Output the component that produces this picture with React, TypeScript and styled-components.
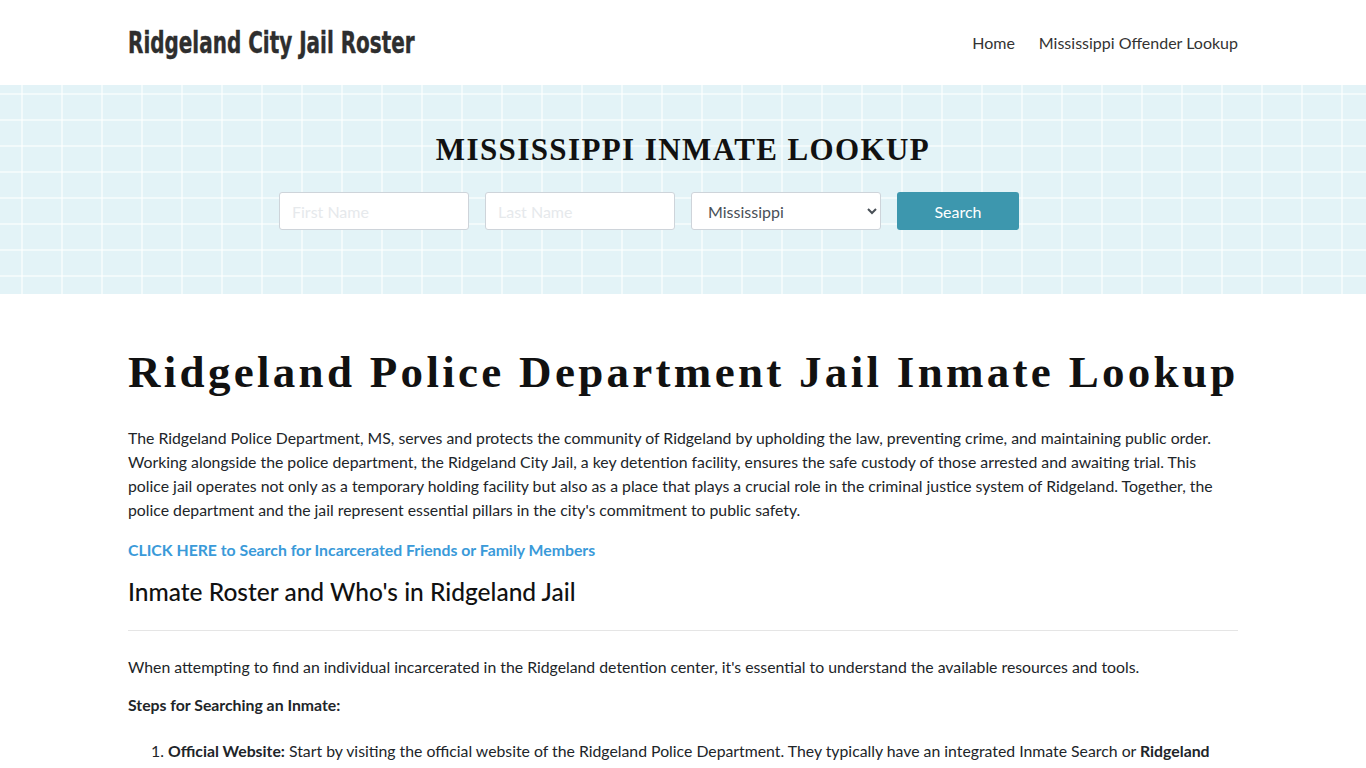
import React from "react";
import styled, { createGlobalStyle } from "styled-components";

const GlobalStyle = createGlobalStyle`
  * { box-sizing: border-box; }
  body {
    margin: 0;
    font-family: Lato, "Noto Sans", sans-serif;
    font-size: 15.8px;
    line-height: 24px;
    color: #212529;
    background: #fff;
  }
`;

const Container = styled.div`
  width: 1110px;
  margin: 0 auto;
`;

const Header = styled.header`
  height: 85px;
  background: #fff;
`;

const HeaderInner = styled(Container)`
  height: 100%;
  display: flex;
  align-items: center;
  justify-content: space-between;
`;

const Brand = styled.a`
  display: inline-block;
  font-family: "Liberation Sans Narrow", "DejaVu Sans Condensed", sans-serif;
  font-weight: 700;
  font-size: 30px;
  color: #2e2e2e;
  text-decoration: none;
  white-space: nowrap;
  transform: scaleX(0.74);
  transform-origin: left center;
  -webkit-text-stroke: 0.4px #2e2e2e;
  margin-top: 1px;
`;

const Nav = styled.nav`
  display: flex;
  gap: 24px;
`;

const NavLink = styled.a`
  font-size: 16px;
  color: #333;
  text-decoration: none;
`;

const Banner = styled.section`
  height: 209px;
  background-color: #e3f3f7;
  background-image:
    linear-gradient(90deg, rgba(255, 255, 255, 0.55) 2px, transparent 2px),
    linear-gradient(0deg, rgba(255, 255, 255, 0.55) 2px, transparent 2px);
  background-size: 40px 26px;
  background-position: 21px 10px;
  display: flex;
  flex-direction: column;
  align-items: center;
  padding-top: 49px;
`;

const BannerTitle = styled.h2`
  margin: 0;
  font-family: "Liberation Serif", "DejaVu Serif", serif;
  font-weight: 700;
  font-size: 31px;
  line-height: 32px;
  letter-spacing: 1.4px;
  color: #111;
`;

const SearchRow = styled.form`
  display: flex;
  gap: 16px;
  margin-top: 26px;
  margin-right: 68px;
`;

const Field = styled.input`
  width: 190px;
  height: 38px;
  border: 1px solid #ced4da;
  border-radius: 3px;
  background: #fff;
  padding: 0 12px;
  font-family: Lato, sans-serif;
  font-size: 16px;
  &::placeholder { color: #e6e9ec; }
`;

const Select = styled.select`
  width: 190px;
  height: 38px;
  border: 1px solid #ced4da;
  border-radius: 3px;
  background: #fff;
  padding: 0 12px;
  font-family: Lato, sans-serif;
  font-size: 16px;
  color: #495057;
`;

const Button = styled.button`
  width: 122px;
  height: 38px;
  border: none;
  border-radius: 3px;
  background: #3d97ae;
  color: #fff;
  font-family: Lato, sans-serif;
  font-size: 16px;
`;

const Main = styled(Container)`
  padding-top: 48px;
`;

const Title = styled.h1`
  margin: 0 0 24px;
  font-family: "Liberation Serif", "DejaVu Serif", serif;
  font-weight: 700;
  font-size: 45px;
  line-height: 60px;
  letter-spacing: 3.3px;
  white-space: nowrap;
  color: #111;
`;

const Intro = styled.p`
  margin: 0;
`;

const Para = styled.p`
  margin: 0 0 14px;
`;

const CtaLink = styled.a`
  display: block;
  font-weight: 700;
  color: #3a9ad9;
  text-decoration: none;
  margin: 16px 0 12px;
`;

const Subhead = styled.h2`
  margin: 0;
  font-size: 24.5px;
  font-weight: 500;
  line-height: 36px;
  color: #111;
`;

const Rule = styled.hr`
  border: none;
  border-top: 1px solid #e5e5e5;
  margin: 20px 0 24px;
`;

const StepList = styled.ol`
  margin: 22px 0 0;
  padding-left: 40px;
`;

export default function App() {
  return (
    <>
      <GlobalStyle />
      <Header>
        <HeaderInner>
          <Brand href="#">Ridgeland City Jail Roster</Brand>
          <Nav>
            <NavLink href="#">Home</NavLink>
            <NavLink href="#">Mississippi Offender Lookup</NavLink>
          </Nav>
        </HeaderInner>
      </Header>
      <Banner>
        <BannerTitle>MISSISSIPPI INMATE LOOKUP</BannerTitle>
        <SearchRow onSubmit={(e) => e.preventDefault()}>
          <Field placeholder="First Name" />
          <Field placeholder="Last Name" />
          <Select defaultValue="Mississippi">
            <option>Mississippi</option>
          </Select>
          <Button type="submit">Search</Button>
        </SearchRow>
      </Banner>
      <Main>
        <Title>Ridgeland Police Department Jail Inmate Lookup</Title>
        <Intro>
          The Ridgeland Police Department, MS, serves and protects the community of Ridgeland by upholding the law,
          preventing crime, and maintaining public order. Working alongside the police department, the Ridgeland City
          Jail, a key detention facility, ensures the safe custody of those arrested and awaiting trial. This police
          jail operates not only as a temporary holding facility but also as a place that plays a crucial role in the
          criminal justice system of Ridgeland. Together, the police department and the jail represent essential
          pillars in the city's commitment to public safety.
        </Intro>
        <CtaLink href="#">CLICK HERE to Search for Incarcerated Friends or Family Members</CtaLink>
        <Subhead>Inmate Roster and Who's in Ridgeland Jail</Subhead>
        <Rule />
        <Para>
          When attempting to find an individual incarcerated in the Ridgeland detention center, it's essential to
          understand the available resources and tools.
        </Para>
        <Para>
          <strong>Steps for Searching an Inmate:</strong>
        </Para>
        <StepList>
          <li>
            <strong>Official Website:</strong> Start by visiting the official website of the Ridgeland Police
            Department. They typically have an integrated Inmate Search or <strong>Ridgeland City Jail Roster</strong>{" "}
            feature.
          </li>
        </StepList>
      </Main>
    </>
  );
}
